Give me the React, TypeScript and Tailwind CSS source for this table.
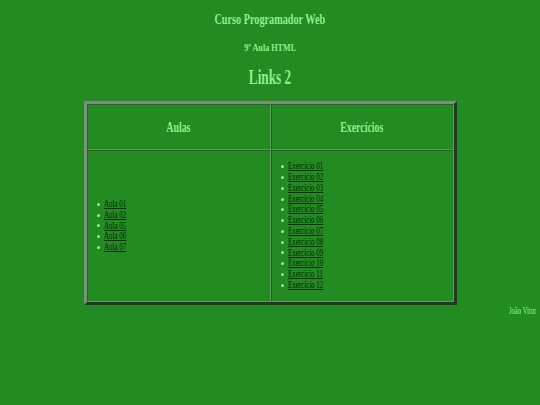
import React from 'react'

const AULAS = ['Aula 01', 'Aula 02', 'Aula 05', 'Aula 06', 'Aula 07']
const EXERCICIOS = Array.from({ length: 12 }, (_, i) => `Exercício ${String(i + 1).padStart(2, '0')}`)

// texto estreito, como no print original
function Squeeze({ children, origin = 'center', className = '' }: {
  children: React.ReactNode; origin?: 'center' | 'left' | 'right'; className?: string
}) {
  const o = origin === 'left' ? 'origin-left' : origin === 'right' ? 'origin-right' : 'origin-center'
  return <span className={`inline-block whitespace-nowrap ${o} ${className}`}>{children}</span>
}

function LinkList({ items }: { items: string[] }) {
  return (
    <ul className="flex flex-col pl-[9px]">
      {items.map(it => (
        <li key={it} className="flex items-center h-[10.8px] text-[10.5px] leading-[10.8px]">
          <span className="w-[3px] h-[3px] rounded-full bg-[#90ee90] mr-[4px] shrink-0" />
          <a href="#" className="text-[#062906]">
            <Squeeze origin="left" className="scale-x-[0.66] underline">{it}</Squeeze>
          </a>
        </li>
      ))}
    </ul>
  )
}

const cell = 'border border-t-[#2e5a2e] border-l-[#2e5a2e] border-b-[#5c9c5c] border-r-[#5c9c5c]'

export default function App() {
  return (
    <div className="min-h-[405px] w-[540px] bg-[#228b22] text-[#90ee90] font-['Liberation_Serif',serif]">
      <div className="pt-[10px] text-center font-bold text-[14px] leading-[20px]">
        <Squeeze className="scale-x-[0.73]">Curso Programador Web</Squeeze>
      </div>
      <div className="mt-[10px] text-center font-bold text-[11px] leading-[14px]">
        <Squeeze className="scale-x-[0.74]">9º Aula HTML</Squeeze>
      </div>
      <div className="mt-[11px] text-center font-bold text-[20px] leading-[24px]">
        <Squeeze className="scale-x-[0.66]">Links 2</Squeeze>
      </div>

      {/* tabela */}
      <div className="mt-[12px] ml-[84px] w-[373px] border-[3px] border-t-[#7d8f7d] border-l-[#7d8f7d] border-b-[#2b332b] border-r-[#2b332b]">
        <div className="grid grid-cols-2">
          <div className={`h-[46px] flex items-center justify-center font-bold text-[15px] ${cell}`}>
            <Squeeze className="scale-x-[0.66]">Aulas</Squeeze>
          </div>
          <div className={`h-[46px] flex items-center justify-center font-bold text-[15px] ${cell}`}>
            <Squeeze className="scale-x-[0.66]">Exercícios</Squeeze>
          </div>
          <div className={`h-[152px] flex items-center ${cell}`}>
            <LinkList items={AULAS} />
          </div>
          <div className={`h-[152px] flex items-center ${cell}`}>
            <LinkList items={EXERCICIOS} />
          </div>
        </div>
      </div>

      <div className="text-right pr-[4px] text-[10px] leading-[12px]">
        <Squeeze origin="right" className="scale-x-[0.66]">João Vitor</Squeeze>
      </div>
    </div>
  )
}
